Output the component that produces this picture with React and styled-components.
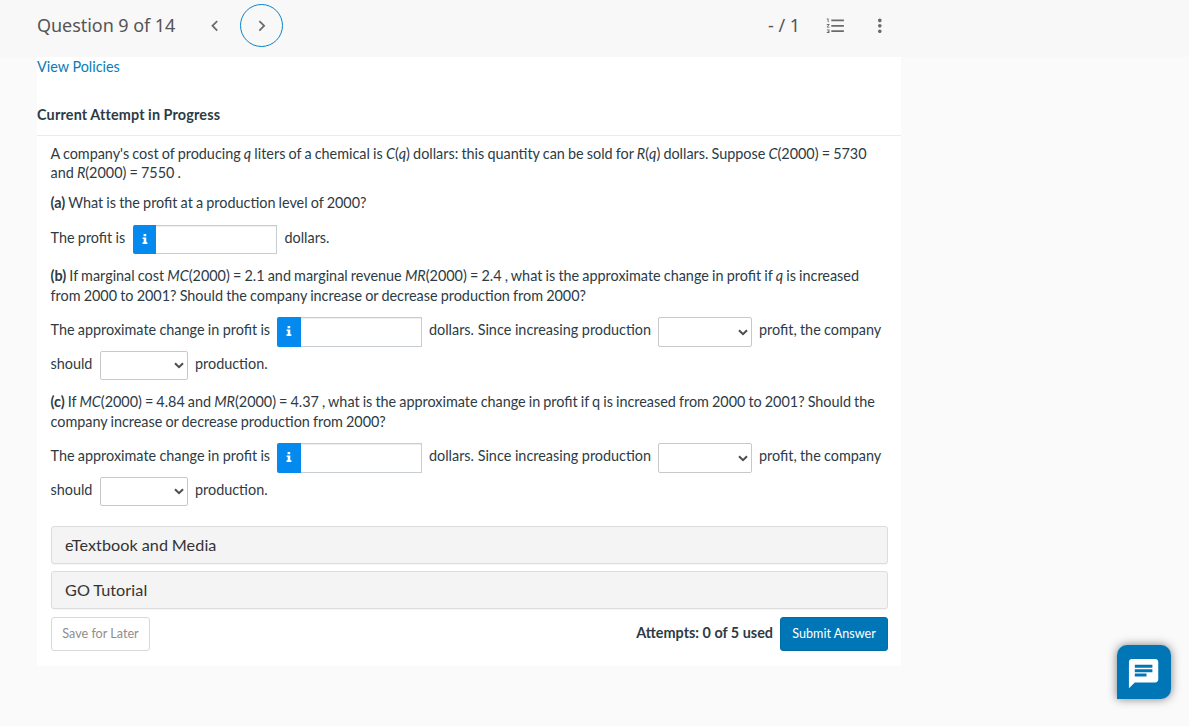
import React from 'react'
import styled, { createGlobalStyle } from 'styled-components'
import {
  MdChat,
  MdChevronLeft,
  MdChevronRight,
  MdFormatListNumbered,
  MdMoreVert,
} from 'react-icons/md'

const GlobalStyle = createGlobalStyle`
  * {
    box-sizing: border-box;
  }

  body {
    margin: 0;
    background: #fafafa;
    color: #2d3b45;
    font-family: Lato, sans-serif;
    font-size: 14.4px;
    line-height: 20px;
    overflow: hidden;
  }
`

const Page = styled.div`
  height: 726px;
`

const Header = styled.header`
  display: flex;
  align-items: center;
  height: 57px;
  padding: 0 0 6px 37px;
  background: #f8f8f8;
  color: #555;
  font-family: 'Noto Sans', sans-serif;
  font-size: 18px;
`

const Title = styled.div`
  width: 167px;
  padding-bottom: 2px;
  letter-spacing: -0.05px;
  white-space: nowrap;
`

const IconButton = styled.button`
  display: flex;
  flex: none;
  align-items: center;
  justify-content: center;
  width: ${p => p.$size || 22}px;
  height: ${p => p.$size || 22}px;
  margin: 0 0 0 ${p => p.$gap || 0}px;
  padding: 0;
  border: 1px solid ${p => (p.$ring ? '#0a84c1' : 'transparent')};
  border-radius: 50%;
  background: none;
  color: #6b6b6b;

  svg {
    flex: none;
  }
`

const Score = styled.div`
  width: 32px;
  margin-left: 485px;
  padding-bottom: 2px;
  white-space: nowrap;
`

const Card = styled.main`
  width: 864px;
  height: 609px;
  margin-left: 37px;
  background: #fff;
`

const PolicyLink = styled.a`
  display: block;
  color: #0a7db8;
`

const Status = styled.div`
  margin-top: 28px;
  padding-bottom: 10px;
  border-bottom: 1px solid #ebebeb;
  font-weight: 700;
  letter-spacing: 0.18px;
  word-spacing: -0.4px;
`

const Content = styled.div`
  padding: 8px 13px 0 14px;
`

const Text = styled.p`
  margin: ${p => p.$top || 0}px 0 0 -0.5px;
  line-height: ${p => p.$line || 20}px;
  word-spacing: ${p => p.$words || -0.55}px;
  white-space: nowrap;
`

const Row = styled.div`
  display: flex;
  height: ${p => p.$height}px;
  margin-top: ${p => p.$top}px;
  white-space: nowrap;
`

const Label = styled.span`
  flex: none;
  width: ${p => (p.$width ? `${p.$width}px` : 'auto')};
  margin: 3px 0 0 ${p => p.$shift || 0}px;
  word-spacing: ${p => p.$words || 0}px;
`

const Field = styled.div`
  display: flex;
  flex: none;
  width: ${p => p.$width}px;
  height: ${p => p.$height}px;
  margin-right: 7px;
`

const Info = styled.button`
  display: flex;
  flex: none;
  align-items: center;
  justify-content: center;
  width: ${p => p.$width}px;
  padding: 0 0 2px;
  border: 0;
  border-radius: 2px 0 0 2px;
  background: #0489ee;
`

const Input = styled.input`
  flex: 1;
  min-width: 0;
  border: 1px solid #c7cdd1;
  border-left: 0;
  border-radius: 0;
  box-shadow: inset 0 1px 1px rgba(0, 0, 0, 0.07);
  outline: 0;
`

const Select = styled.button`
  display: flex;
  flex: none;
  align-items: center;
  justify-content: flex-end;
  width: ${p => p.$width}px;
  height: ${p => p.$height}px;
  margin: 0 7px 0 0;
  padding: 0 3px 0 0;
  border: 1px solid #c8c8c8;
  border-radius: 2px;
  background: #fff;
`

const Panel = styled.div`
  display: flex;
  align-items: center;
  height: 38px;
  margin-top: ${p => p.$top}px;
  padding: 0 13px;
  border: 1px solid #ddd;
  border-radius: 3px;
  background: #f4f4f4;
  box-shadow: 0 1px 1px rgba(0, 0, 0, 0.04);
  color: #333;
  font-size: 16.2px;
  letter-spacing: 0.08px;
  word-spacing: -0.5px;
`

const Footer = styled.div`
  display: flex;
  align-items: center;
  margin-top: 8px;
`

const Button = styled.button`
  width: ${p => p.$width}px;
  height: 34px;
  padding: 0 0 2px;
  border: 1px solid ${p => (p.$primary ? '#006fa8' : '#d9d9d9')};
  border-radius: 3px;
  background: ${p => (p.$primary ? '#0076b6' : '#fff')};
  color: ${p => (p.$primary ? '#fff' : '#8e8e8e')};
  font-family: inherit;
  font-size: 12.6px;
`

const Attempts = styled.strong`
  margin: 0 7px 2px auto;
`

const ChatButton = styled.button`
  position: fixed;
  right: 18px;
  bottom: 27px;
  display: flex;
  align-items: center;
  justify-content: center;
  width: 54px;
  height: 54px;
  padding: 3px 0 0;
  border: 0;
  border-radius: 10px 10px 10px 0;
  background: #0076b6;
  color: #fff;
  box-shadow: 0 0 10px rgba(0, 0, 0, 0.5);
`

const NumberField = ({ width = 145, height = 30, info = 24 }) => (
  <Field $width={width} $height={height}>
    <Info $width={info} aria-label="info">
      <svg width="6" height="10" viewBox="0 0 6 10" fill="#fff">
        <path d="M1.6 0h2.6v2.2H1.6zM.6 3.4h3.7v4.9h1.1V10H.5V8.3h1.2V5.1H.6z" />
      </svg>
    </Info>
    <Input />
  </Field>
)

const Dropdown = ({ width, height }) => (
  <Select $width={width} $height={height}>
    <svg width="10" height="7" viewBox="0 0 10 7" fill="none">
      <path d="M1 1.2L5 5.2L9 1.2" stroke="#4d4d4d" strokeWidth="2" />
    </svg>
  </Select>
)

const ProfitAnswer = () => (
  <>
    <Row $height={34} $top={11}>
      <Label $width={226.5} $shift={-0.5} $words={-0.35}>
        The approximate change in profit is
      </Label>
      <NumberField />
      <Label $width={229}>dollars. Since increasing production</Label>
      <Dropdown width={94} height={30} />
      <Label $words={-0.4}>profit, the company</Label>
    </Row>
    <Row $height={29} $top={0}>
      <Label $width={49.5} $shift={-0.5}>
        should
      </Label>
      <Dropdown width={88} height={29} />
      <Label>production.</Label>
    </Row>
  </>
)

const App = () => (
  <Page>
    <GlobalStyle />
    <Header>
      <Title>Question 9 of 14</Title>
      <IconButton aria-label="previous">
        <MdChevronLeft size={21.6} />
      </IconButton>
      <IconButton $ring $size={43} $gap={14} aria-label="next">
        <MdChevronRight size={21.6} />
      </IconButton>
      <Score>- / 1</Score>
      <IconButton $gap={25} aria-label="question list">
        <MdFormatListNumbered size={21.6} />
      </IconButton>
      <IconButton $gap={22} aria-label="more">
        <MdMoreVert size={21.6} />
      </IconButton>
    </Header>
    <Card>
      <PolicyLink>View Policies</PolicyLink>
      <Status>Current Attempt in Progress</Status>
      <Content>
        <Text $line={19}>
          A company's cost of producing <i>q</i> liters of a chemical is{' '}
          <i>C</i>(<i>q</i>) dollars: this quantity can be sold for <i>R</i>(
          <i>q</i>) dollars. Suppose <i>C</i>(2000) = 5730
          <br />
          and <i>R</i>(2000) = 7550 .
        </Text>
        <Text $top={11}>
          <b>(a)</b> What is the profit at a production level of 2000?
        </Text>
        <Row $height={29} $top={12}>
          <Label $width={82.5} $shift={-0.5} $words={-0.35}>
            The profit is
          </Label>
          <NumberField width={144} height={29} info={23} />
          <Label $shift={0.5}>dollars.</Label>
        </Row>
        <Text $top={12} $words={-0.52}>
          <b>(b)</b> If marginal cost <i>MC</i>(2000) = 2.1 and marginal revenue{' '}
          <i>MR</i>(2000) = 2.4 , what is the approximate change in profit if{' '}
          <i>q</i> is increased
          <br />
          from 2000 to 2001? Should the company increase or decrease production
          from 2000?
        </Text>
        <ProfitAnswer />
        <Text $top={12} $words={-0.62}>
          <b>(c)</b> If <i>MC</i>(2000) = 4.84 and <i>MR</i>(2000) = 4.37 , what
          is the approximate change in profit if q is increased from 2000 to
          2001? Should the
          <br />
          company increase or decrease production from 2000?
        </Text>
        <ProfitAnswer />
        <Panel $top={20}>eTextbook and Media</Panel>
        <Panel $top={7}>GO Tutorial</Panel>
        <Footer>
          <Button $width={99}>Save for Later</Button>
          <Attempts>Attempts: 0 of 5 used</Attempts>
          <Button $primary $width={108}>
            Submit Answer
          </Button>
        </Footer>
      </Content>
    </Card>
    <ChatButton aria-label="chat">
      <MdChat size={35.2} />
    </ChatButton>
  </Page>
)

export default App
